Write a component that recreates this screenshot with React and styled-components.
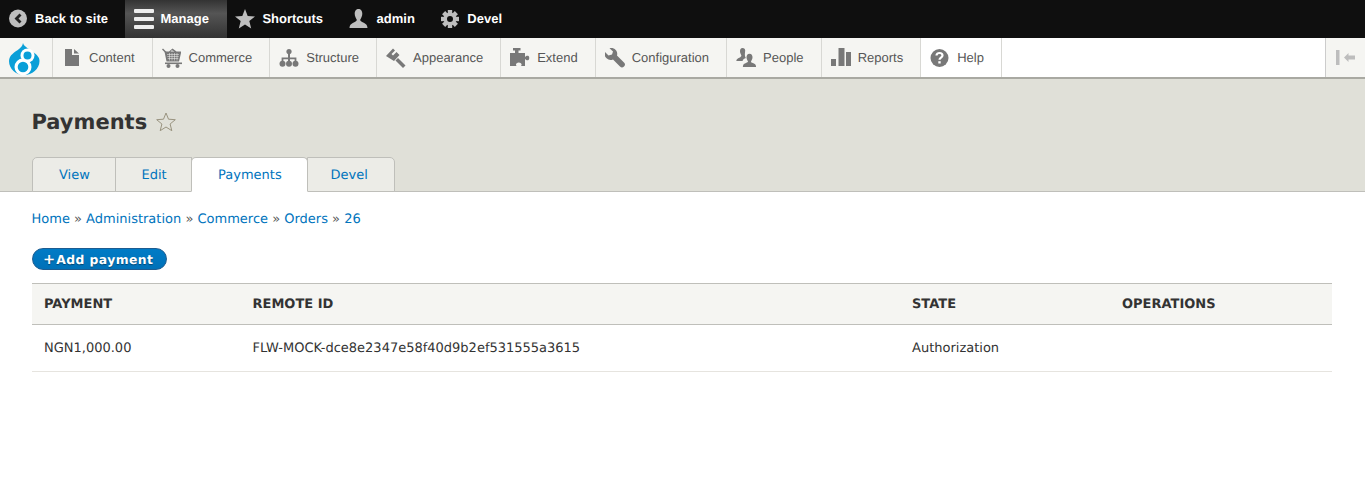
import React from "react";
import styled, { createGlobalStyle } from "styled-components";

const GlobalStyle = createGlobalStyle`
  html, body {
    margin: 0;
    padding: 0;
    background: #fff;
    color: #333;
    font-family: "DejaVu Sans", sans-serif;
    font-size: 13px;
    text-rendering: geometricPrecision;
  }
  * {
    box-sizing: border-box;
  }
`;

const Bar = styled.div`
  display: flex;
  height: 38px;
  background: #0f0f0f;
  font-family: "Liberation Sans", Arial, sans-serif;
`;

const BarItem = styled.a`
  display: flex;
  align-items: center;
  padding: 0 ${(props) => props.right || 17.5}px 1px ${(props) => props.left || 9}px;
  color: #fff;
  font-weight: bold;
  font-size: 13px;
  background: ${(props) =>
    props.active ? "linear-gradient(to bottom, #333 0%, #555 35%, #333 100%)" : "none"};
`;

const BarIcon = styled.svg`
  width: 20px;
  height: 20px;
  margin: 1px ${(props) => props.gap || 6.5}px 0 0;
  flex: none;
  fill: ${(props) => props.color || "#bebebe"};
`;

const Tray = styled.div`
  position: relative;
  z-index: 1;
  display: flex;
  justify-content: space-between;
  height: 41px;
  background: #fff;
  border-bottom: 2px solid #a9a9a2;
  font-family: "Liberation Sans", Arial, sans-serif;
`;

const TrayList = styled.div`
  display: flex;
`;

const Logo = styled.a`
  display: block;
  width: 53px;
  background: #f5f5f2;
  border-right: 1px solid #d8d8d4;
`;

const TrayItem = styled.a`
  display: flex;
  align-items: center;
  padding: 0 17.05px 0 9px;
  color: #565656;
  font-size: 13px;
  background: ${(props) => (props.light ? "#fff" : "#f5f5f2")};
  border-right: 1px solid #d8d8d4;
`;

const TrayIcon = styled.svg`
  width: 20px;
  height: 20px;
  margin-right: 7px;
  flex: none;
  fill: #787878;
`;

const Toggle = styled.a`
  display: flex;
  align-items: center;
  justify-content: center;
  width: 40px;
  background: #f5f5f2;
  border-left: 1px solid #ccc;
`;

const Header = styled.div`
  height: 113px;
  padding: 0 32px;
  background: #e0e0d8;
  border-bottom: 1px solid #bfbfba;
  display: flex;
  flex-direction: column;
  justify-content: space-between;
`;

const TitleRow = styled.div`
  display: flex;
  align-items: center;
  gap: 9px;
  padding-top: 28px;
`;

const Title = styled.h1`
  margin: 0 0 0 -0.5px;
  font-size: 21px;
  line-height: 30px;
  font-weight: bold;
  color: #333;
`;

const Tabs = styled.div`
  display: flex;
  margin-bottom: -1px;
`;

const Tab = styled.a`
  display: block;
  flex: none;
  width: ${(props) => props.w}px;
  height: 35px;
  line-height: 35px;
  padding-left: ${(props) => props.pad}px;
  margin-left: -1px;
  color: #0074bd;
  background: ${(props) => (props.active ? "#fff" : "#ecece7")};
  border: 1px solid #bfbfba;
  border-bottom: ${(props) => (props.active ? "1px solid #fff" : "1px solid #bfbfba")};
  border-top-left-radius: ${(props) => (props.first || props.active ? "5px" : "0")};
  border-top-right-radius: ${(props) => (props.last || props.active ? "5px" : "0")};
  position: relative;
  z-index: ${(props) => (props.active ? 1 : 0)};
  &:first-child {
    margin-left: 0;
  }
`;

const Content = styled.div`
  padding: 18px 33px 0 32px;
`;

const Breadcrumb = styled.div`
  line-height: 19px;
  color: #555;
  margin-left: -0.5px;
`;

const Crumb = styled.a`
  color: #0074bd;
`;

const ActionButton = styled.a`
  display: inline-flex;
  align-items: center;
  height: 22px;
  margin-top: 19px;
  padding: 1px 12.5px 0 10px;
  border: 1px solid #1e5c90;
  border-radius: 20px;
  background: linear-gradient(to bottom, #007bc6, #0071b8);
  color: #fff;
  font-weight: bold;
  font-size: 12.35px;
  letter-spacing: 0.45px;
  text-shadow: 0 1px 1px rgba(0, 0, 0, 0.4);
`;

const Plus = styled.span`
  font-size: 14.5px;
  font-weight: 900;
  letter-spacing: 0;
  line-height: 14px;
  padding-right: 1px;
`;

const Table = styled.table`
  display: table;
  width: 1300px;
  margin-top: 13px;
  border-collapse: collapse;
  table-layout: fixed;
`;

const Th = styled.th`
  width: ${(props) => props.w}px;
  height: 41px;
  padding: 0 12px;
  text-align: left;
  text-transform: uppercase;
  font-size: 13px;
  font-weight: bold;
  color: #333;
  background: #f5f5f2;
  border-top: 1px solid #bfbfba;
  border-bottom: 1px solid #bfbfba;
`;

const Td = styled.td`
  height: 47px;
  padding: 0 12px;
  color: #333;
  border-bottom: 1px solid #e6e4df;
`;

const StarOutline = styled.svg`
  width: 20px;
  height: 20px;
  flex: none;
  fill: none;
  stroke: #99937f;
  stroke-width: 1;
`;

const Wheel = ({ x, y, r }) => <circle cx={x} cy={y} r={r} />;

const Gear = () => {
  const teeth = [0, 45, 90, 135, 180, 225, 270, 315];
  return (
    <>
      <path
        fillRule="evenodd"
        d="M10 3.5a6.5 6.5 0 1 0 0 13a6.5 6.5 0 1 0 0-13zM10 7a3 3 0 1 1 0 6a3 3 0 1 1 0-6z"
      />
      {teeth.map((deg) => (
        <rect key={deg} x="7.8" y="1" width="4.4" height="4" transform={`rotate(${deg} 10 10)`} />
      ))}
    </>
  );
};

const trayItems = [
  {
    label: "Content",
    icon: (
      <>
        <path d="M3 1h7v6h7v11H3z" />
        <path d="M12 1l5 4.5h-5z" />
      </>
    ),
  },
  {
    label: "Commerce",
    icon: (
      <>
        <path d="M0 1.500l1-1 3.500 3.500-1 1z" />
        <path d="M10.500 0.500l4 3h4.500v1.500l-2 8.500H4.500l-2-10h4.500zM9.800 2.300L8.500 3.500h4z" />
        <path d="M3 14.500h17v1.600H3z" />
        <Wheel x={6.500} y={18} r={2} />
        <Wheel x={15.500} y={18} r={2} />
        <path
          d="M5 6.500h12M5.300 8.500h11.400M5.700 10.500h10.600M7.500 5v7.500M10 5v7.500M12.500 5v7.500M15 5v7.500"
          stroke="#f5f5f2"
          strokeWidth="0.5"
        />
      </>
    ),
  },
  {
    label: "Structure",
    icon: (
      <>
        <Wheel x={10} y={3.500} r={2.600} />
        <path d="M9 5h2v4.500h6.400V14h-1.800v-2.700H11V14H9v-2.700H4.400V14H2.600V9.500H9z" />
        <Wheel x={3.500} y={15.800} r={3} />
        <Wheel x={10} y={15.800} r={3} />
        <Wheel x={16.500} y={15.800} r={3} />
      </>
    ),
  },
  {
    label: "Appearance",
    icon: (
      <>
        <path d="M0 8L7 0.500l2 2-3.500 3.500 1.500 1.500L10.500 4l3 3L8 13z" />
        <path d="M9.500 12.500L12 10l7.500 7.500-2.500 2.500z" />
      </>
    ),
  },
  {
    label: "Extend",
    icon: (
      <path d="M3 0h7.500v2.500H8.500V5H15v4c1-1.300 2-1.500 3-1.300 1.700.4 1.700 4.200 0 4.600-1 .2-2-.1-3-1.300v7H11c.8-1 .9-2-.1-2.800-1-.8-3.200-.8-4.200 0-1 .8-.9 1.800-.1 2.800H0V5h5V2.500H3z" />
    ),
  },
  {
    label: "Configuration",
    icon: (
      <path d="M7.500 0A6 6 0 0 1 12 7.500l7 7A2.800 2.800 0 0 1 15 18.500l-7-7A6 6 0 0 1 0 4l3.500 3.500L7 6.500l1-3L4.500.300A6 6 0 0 1 7.500 0z" />
    ),
  },
  {
    label: "People",
    icon: (
      <>
        <path d="M6.500 0C4.700 0 4 1.600 4 3.200c0 1.700.9 3.100 1.300 4 .3.900-.6 1.700-2 2.500C1.800 10.500.400 11 .300 13h6.200c.4-1.600 1.800-2.400 3.400-3-.7-1-1.200-2.400-1-4.300.1-1.300.300-2.500.300-3.200C9.200 1 8.300 0 6.500 0z" />
        <path d="M13.500 5.800c-2 0-3 1.600-3 3.500 0 1.800.9 3 1.400 4 .3.800-.5 1.200-1.900 1.800-1.500.6-3 1-3.100 3.900h13.200c-.1-2.900-1.700-3.300-3.200-3.900-1.400-.6-2.100-1-1.800-1.800.5-1 1.400-2.200 1.400-4 0-1.900-1-3.500-3-3.500z" />
      </>
    ),
  },
  {
    label: "Reports",
    icon: (
      <>
        <path d="M0 11h5v7H0z" />
        <path d="M7.500 0h6v18h-6z" />
        <path d="M15 4h5v14h-5z" />
      </>
    ),
  },
  {
    label: "Help",
    light: true,
    icon: (
      <>
        <circle cx="9.500" cy="10" r="9" />
        <path
          d="M6.500 7.500C6.500 5.700 7.900 5 9.500 5s3 .9 3 2.400c0 2.200-3 2.200-3 4.300"
          fill="none"
          stroke="#fff"
          strokeWidth="2.200"
        />
        <path d="M8.300 13.200h2.400v2.300H8.300z" fill="#fff" />
      </>
    ),
  },
];

const App = () => {
  return (
    <>
      <GlobalStyle />
      <Bar>
        <BarItem>
          <BarIcon viewBox="0 0 20 20" gap={6}>
            <circle cx="9" cy="9.500" r="9" />
            <path d="M10.500 4.500L5.500 9.500l5 5 2-2-3-3 3-3z" fill="#222" />
          </BarIcon>
          Back to site
        </BarItem>
        <BarItem active right={18.500}>
          <BarIcon viewBox="0 0 20 20" gap={6} color="#eee">
            <rect x="0" y="0" width="20" height="4" rx="1" />
            <rect x="0" y="8" width="20" height="4" rx="1" />
            <rect x="0" y="16" width="20" height="4" rx="1" />
          </BarIcon>
          Manage
        </BarItem>
        <BarItem left={8}>
          <BarIcon viewBox="0 0 20 20" gap={7}>
            <path d="M10 0l2.700 6.900 7.300.5-5.700 4.700 1.900 7.300L10 15.400 3.800 19.400l1.900-7.300L0 7.400l7.300-.5z" />
          </BarIcon>
          Shortcuts
        </BarItem>
        <BarItem left={8.500} right={17}>
          <BarIcon viewBox="0 0 20 20" gap={7.500}>
            <path d="M9.500 0C6.800 0 5.700 2.300 5.700 4.800c0 2.500 1.300 4.500 2 5.700.5 1.200-.8 2-2.800 3C3 14.400.700 15.200.500 19h18c-.2-3.800-2.500-4.600-4.400-5.500-2-1-3.300-1.800-2.800-3 .7-1.200 2-3.200 2-5.700C13.300 2.300 12.200 0 9.500 0z" />
          </BarIcon>
          admin
        </BarItem>
        <BarItem left={8.500}>
          <BarIcon viewBox="0 0 20 20" gap={7}>
            <Gear />
          </BarIcon>
          Devel
        </BarItem>
      </Bar>
      <Tray>
        <TrayList>
          <Logo>
            <svg width="52" height="39" viewBox="0 0 52 39">
              <path
                fill="#0a9fd8"
                d="M23 5C24 9 30 11 33 14C37 17 39.500 19 39.500 23C39.500 31 32 37 24 37C16 37 9 31 9 23C9 17 15 14 19 11C21 9.500 22.500 8 23 5Z"
              />
              <circle cx="27.500" cy="17.500" r="7" fill="#fff" />
              <circle cx="23" cy="29" r="8.500" fill="#fff" />
              <circle cx="27.500" cy="17.500" r="4" fill="#0a9fd8" />
              <circle cx="23" cy="29" r="5.300" fill="#0a9fd8" />
            </svg>
          </Logo>
          {trayItems.map((item) => (
            <TrayItem key={item.label} light={item.light}>
              <TrayIcon viewBox="0 0 20 20">{item.icon}</TrayIcon>
              {item.label}
            </TrayItem>
          ))}
        </TrayList>
        <Toggle>
          <svg width="20" height="16" viewBox="0 0 20 16" fill="#bdbdbd">
            <rect x="0" y="0" width="3.500" height="15" />
            <path d="M8 7.500L12.500 3v2.500H19v4h-6.500V12z" />
          </svg>
        </Toggle>
      </Tray>
      <Header>
        <TitleRow>
          <Title>Payments</Title>
          <StarOutline viewBox="0 0 20 20">
            <path d="M10 1l2.500 6.200 6.800.5-5.200 4.300 1.700 6.700L10 15l-5.800 3.700 1.700-6.700L.700 7.700l6.800-.5z" />
          </StarOutline>
        </TitleRow>
        <Tabs>
          <Tab first w={84} pad={26}>View</Tab>
          <Tab w={77} pad={25.500}>Edit</Tab>
          <Tab active w={117} pad={26}>Payments</Tab>
          <Tab last w={88} pad={22.500}>Devel</Tab>
        </Tabs>
      </Header>
      <Content>
        <Breadcrumb>
          <Crumb>Home</Crumb> » <Crumb>Administration</Crumb> » <Crumb>Commerce</Crumb> »{" "}
          <Crumb>Orders</Crumb> » <Crumb>26</Crumb>
        </Breadcrumb>
        <ActionButton>
          <Plus>+</Plus>Add payment
        </ActionButton>
        <Table>
          <thead>
            <tr>
              <Th w={208.500}>Payment</Th>
              <Th w={659.500}>Remote ID</Th>
              <Th w={210}>State</Th>
              <Th w={222}>Operations</Th>
            </tr>
          </thead>
          <tbody>
            <tr>
              <Td>NGN1,000.00</Td>
              <Td>FLW-MOCK-dce8e2347e58f40d9b2ef531555a3615</Td>
              <Td>Authorization</Td>
              <Td></Td>
            </tr>
          </tbody>
        </Table>
      </Content>
    </>
  );
};

export default App;
